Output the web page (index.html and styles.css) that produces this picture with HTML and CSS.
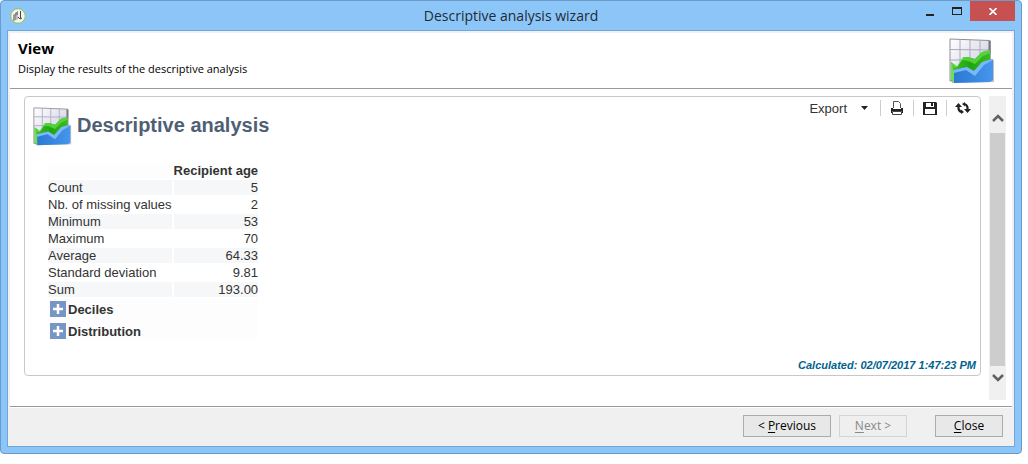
FILE: index.html
```html
<!DOCTYPE html>
<html lang="en">
<head>
<meta charset="utf-8">
<title>Descriptive analysis wizard</title>
<link rel="stylesheet" href="styles.css">
</head>
<body>
<svg class="defs" width="0" height="0" aria-hidden="true">
  <defs>
    <linearGradient id="sheet" x1="0" y1="0" x2="1" y2="1"><stop offset="0" stop-color="#fff"/><stop offset="1" stop-color="#c4c4dc"/></linearGradient>
    <linearGradient id="green" x1="0" y1="0" x2="1" y2="0"><stop offset="0" stop-color="#3cc425"/><stop offset=".5" stop-color="#1fa50f"/><stop offset="1" stop-color="#3dbb26"/></linearGradient>
    <linearGradient id="blue" x1="0" y1="0" x2="1" y2="0"><stop offset="0" stop-color="#2a78d2"/><stop offset="1" stop-color="#4596ec"/></linearGradient>
    <symbol id="chart" viewBox="0 0 46 46">
      <path d="M2 2 42 3v18l3 1v22L3 45z" fill="#777" opacity=".45"/>
      <path d="M1 1 41 2.500V42L1 43z" fill="url(#sheet)" stroke="#8d8d98"/>
      <path d="M11 1.500V30M21 2V30M31 2V25M1 11.500 41 12M1 22 41 22" stroke="#aaaabc" fill="none"/>
      <path d="M40.500 3v12" stroke="#777783" stroke-width="2"/>
      <path d="M2 24 8 29l7-10 4 0 7 2 7-7 8-2v18L25 40 2 43z" fill="url(#green)"/>
      <path d="m2 24 6 4 6-9 5 0 7 2 7-7 8-2v3l-7 3-8 8-7-3-6-1-6 8-5-1z" fill="#5fd941" opacity=".8"/>
      <path d="m4 32 14-3 7 5 8-9 10-4 1 1v20l-3 2L5 45z" fill="url(#blue)"/>
      <path d="m4 32 14-3 7 4 8-9 10-3 1 1-9 5-9 11-9-6-12 3z" fill="#7bb8fa"/>
      <path d="M2 25v17l3 2V34z" fill="#6ee04c"/>
    </symbol>
    <symbol id="plus" viewBox="0 0 16 16"><path fill="#7596c6" d="M0 0h16v16H0z"/><path d="M8 3v10M3 8h10" stroke="#fff" stroke-width="2.500"/></symbol>
  </defs>
</svg>
<main class="window">
  <header class="titlebar">
    <svg class="app-icon" viewBox="0 0 16 16" aria-hidden="true"><circle cx="8" cy="8" r="7.300" fill="#f3f3f0" stroke="#9abf45"/><path d="m3 7 3-2v7l-3 1z" fill="#999"/><path d="m6 8 2-1v4l-2 1z" fill="#bbb"/><path d="m5 5 3-2v4L5 8z" fill="#888"/><path d="M10.500 3v7M8 9l2 2 2-1" stroke="#444" fill="none"/></svg>
    <h1 class="window-title">Descriptive analysis wizard</h1>
    <div class="window-controls">
      <button class="control" type="button" aria-label="Minimize"><svg width="8" height="10"><path d="M0 8h8v2H0z" fill="#222"/></svg></button>
      <button class="control" type="button" aria-label="Maximize"><svg width="10" height="8"><path d="M0 0h10v8H0zM1 2v5h8V2z" fill="#222" fill-rule="evenodd"/></svg></button>
      <button class="control control-close" type="button" aria-label="Close window"><svg width="8" height="7"><path d="m.500 0 7 7M7.500 0l-7 7" stroke="#fff" stroke-width="1.600"/></svg></button>
    </div>
  </header>
  <div class="client">
    <section class="intro">
      <div>
        <h2 class="intro-title">View</h2>
        <p class="intro-text">Display the results of the descriptive analysis</p>
      </div>
      <svg class="intro-icon" aria-hidden="true"><use href="#chart"/></svg>
    </section>
    <div class="content">
      <section class="report">
        <div class="report-top">
          <div class="report-heading">
            <svg class="report-icon" aria-hidden="true"><use href="#chart"/></svg>
            <h3 class="report-title">Descriptive analysis</h3>
          </div>
          <div class="toolbar">
            <button class="export" type="button">Export<svg width="7" height="4"><path d="M0 0h7L3.500 4z" fill="#222"/></svg></button>
            <button class="tool" type="button" aria-label="Print"><svg width="12" height="14"><path d="M2.500 7V.500h5l2 2V7" fill="none" stroke="#555"/><path d="M0 7h2v1h8V7h2v5h-1v-2H1v2H0z" fill="#222"/><path d="M1 8h10v2H1z" fill="#222"/><path d="M1.500 10.500h9v3h-9z" fill="#fff" stroke="#444"/></svg></button>
            <button class="tool" type="button" aria-label="Save"><svg width="14" height="13"><path d="M0 0h13l1 1v12H0zM3 1v4h8V1zM2 7v5h10V7z" fill="#222" fill-rule="evenodd"/><path d="M8 1h2v3H8z" fill="#222"/></svg></button>
            <button class="tool" type="button" aria-label="Refresh"><svg width="16" height="12"><path d="M3.500 4v2.500Q4 9.500 7 10M12.500 8V5.500Q12 2.500 9 2" fill="none" stroke="#222" stroke-width="2.200"/><path d="M3.500 1 7 5H0zM12.500 11 16 7H9zM10 0v4.500L7 2zM6 7.500V12l3-2z" fill="#222"/></svg></button>
          </div>
        </div>
        <table class="stats">
          <thead><tr><td></td><th scope="col">Recipient age</th></tr></thead>
          <tbody>
            <tr><th scope="row">Count</th><td>5</td></tr>
            <tr><th scope="row">Nb. of missing values</th><td>2</td></tr>
            <tr><th scope="row">Minimum</th><td>53</td></tr>
            <tr><th scope="row">Maximum</th><td>70</td></tr>
            <tr><th scope="row">Average</th><td>64.33</td></tr>
            <tr><th scope="row">Standard deviation</th><td>9.81</td></tr>
            <tr><th scope="row">Sum</th><td>193.00</td></tr>
          </tbody>
        </table>
        <div class="groups">
          <button class="group" type="button" aria-expanded="false"><svg width="16" height="16"><use href="#plus"/></svg>Deciles</button>
          <button class="group" type="button" aria-expanded="false"><svg width="16" height="16"><use href="#plus"/></svg>Distribution</button>
        </div>
        <p class="calculated">Calculated: 02/07/2017 1:47:23 PM</p>
      </section>
      <div class="scrollbar">
        <button class="scroll-button" type="button" aria-label="Scroll up"><svg width="12" height="8"><path d="m1 7 5-5 5 5" fill="none" stroke="#606060" stroke-width="2.500"/></svg></button>
        <div class="scroll-thumb"></div>
        <button class="scroll-button" type="button" aria-label="Scroll down"><svg width="12" height="8"><path d="m1 1 5 5 5-5" fill="none" stroke="#606060" stroke-width="2.500"/></svg></button>
      </div>
    </div>
    <footer class="actions">
      <button class="action action-previous" type="button">&lt; <u>P</u>revious</button>
      <button class="action" type="button" disabled><u>N</u>ext &gt;</button>
      <button class="action action-close" type="button"><u>C</u>lose</button>
    </footer>
  </div>
</main>
</body>
</html>
```
FILE: styles.css
```css
* { box-sizing: border-box; }
body {
  margin: 0;
  padding: 0 6px 10px 0;
  min-height: 100vh;
  display: flex;
  background: #fff;
  color: #000;
  font-family: "Open Sans", "Noto Sans", sans-serif;
  font-size: 12px;
}
h1, h2, h3, p { margin: 0; }
button { font: inherit; color: inherit; border: 0; padding: 0; background: none; }
svg { display: block; }
u { text-underline-offset: 2px; }
.defs { position: absolute; }

.window {
  flex: 1;
  display: flex;
  flex-direction: column;
  padding: 0 6px 6px;
  border: 1px solid #6b9bc9;
  border-radius: 4px;
  background: #8cc6f9;
}
.titlebar {
  height: 29px;
  display: grid;
  grid-template-columns: 1fr auto 1fr;
  align-items: center;
}
.app-icon { width: 16px; height: 16px; margin-left: 3px; }
.window-title { font-size: 14px; font-weight: 400; color: #222b35; }
.window-controls { display: flex; justify-content: flex-end; align-self: start; }
.control { width: 27px; height: 20px; display: flex; align-items: center; justify-content: center; }
.control-close { width: 45px; background: #c75050; }

.client {
  flex: 1;
  display: flex;
  flex-direction: column;
  border: 1px solid #73a6d8;
  padding: 2px 2px 0;
  background: #f0f0f0;
}
.intro {
  display: flex;
  justify-content: space-between;
  height: 56px;
  padding: 5px 17px 3px 8px;
  border-bottom: 1px solid #999;
  background: #fff;
}
.intro-title { font-size: 15px; line-height: 20px; font-weight: 700; }
.intro-text { font-size: 11px; line-height: 22px; }
.intro-icon { width: 46px; height: 46px; }

.content {
  flex: 1;
  display: flex;
  gap: 8px;
  padding: 7px 6px 6px 14px;
  border-bottom: 1px solid #999;
  background: #fff;
}
.report {
  flex: 1;
  display: flex;
  flex-direction: column;
  margin-bottom: 24px;
  padding: 1px 4px 3px 8px;
  border: 1px solid #c8c8c8;
  border-radius: 4px;
  color: #333;
  font-family: "Liberation Sans", Arial, sans-serif;
  font-size: 13px;
}
.report-top { display: flex; justify-content: space-between; }
.report-heading { display: flex; gap: 5px; padding-top: 9px; }
.report-icon { width: 39px; height: 39px; }
.report-title { font-size: 20px; line-height: 36px; color: #4f5f74; }
.toolbar { display: flex; align-items: center; height: 20px; }
.export { display: flex; align-items: center; gap: 14px; margin-right: 12px; }
.tool {
  width: 33px;
  height: 16px;
  display: flex;
  align-items: center;
  justify-content: center;
  border-left: 1px solid #ccc;
}
.tool:last-child { width: 30px; padding-left: 2px; }
.stats { width: 214px; margin: 15px 0 0 13px; border-spacing: 2px; line-height: 15px; }
.stats th, .stats td { height: 15px; padding: 0; text-align: right; white-space: nowrap; }
.stats tbody th { width: 124px; text-align: left; font-weight: 400; }
.stats thead th, .stats thead td { background: #fdfdfd; }
.stats tbody tr:nth-child(odd) > * { background: #f6f7f9; }
.groups { width: 210px; margin-left: 15px; padding-top: 2px; display: grid; gap: 6px; background: #fdfdfd; }
.group { display: flex; align-items: center; gap: 2px; height: 16px; padding-left: 2px; font-weight: 700; }
.calculated { margin-top: auto; text-align: right; font-size: 11px; line-height: 14px; font-weight: 700; font-style: italic; color: #00638f; }

.scrollbar { width: 17px; display: flex; flex-direction: column; background: #f0f0f0; }
.scroll-button { height: 37px; display: flex; align-items: center; justify-content: center; padding-top: 6px; }
.scroll-button:last-child { height: 34px; padding: 0 0 10px; }
.scroll-thumb { flex: 1; margin: 0 1px; background: #cdcdcd; }

.actions {
  display: flex;
  align-items: center;
  justify-content: flex-end;
  gap: 8px;
  height: 39px;
  padding: 0 9px 2px 0;
  border-top: 1px solid #fff;
}
.action { width: 68px; height: 22px; line-height: 18px; border: 1px solid #acacac; background: #e8e8e8; }
.action:disabled { border-color: #d4d4d4; background: #efefef; color: #888; }
.action-previous { width: 88px; }
.action-close { margin-left: 20px; }
```
